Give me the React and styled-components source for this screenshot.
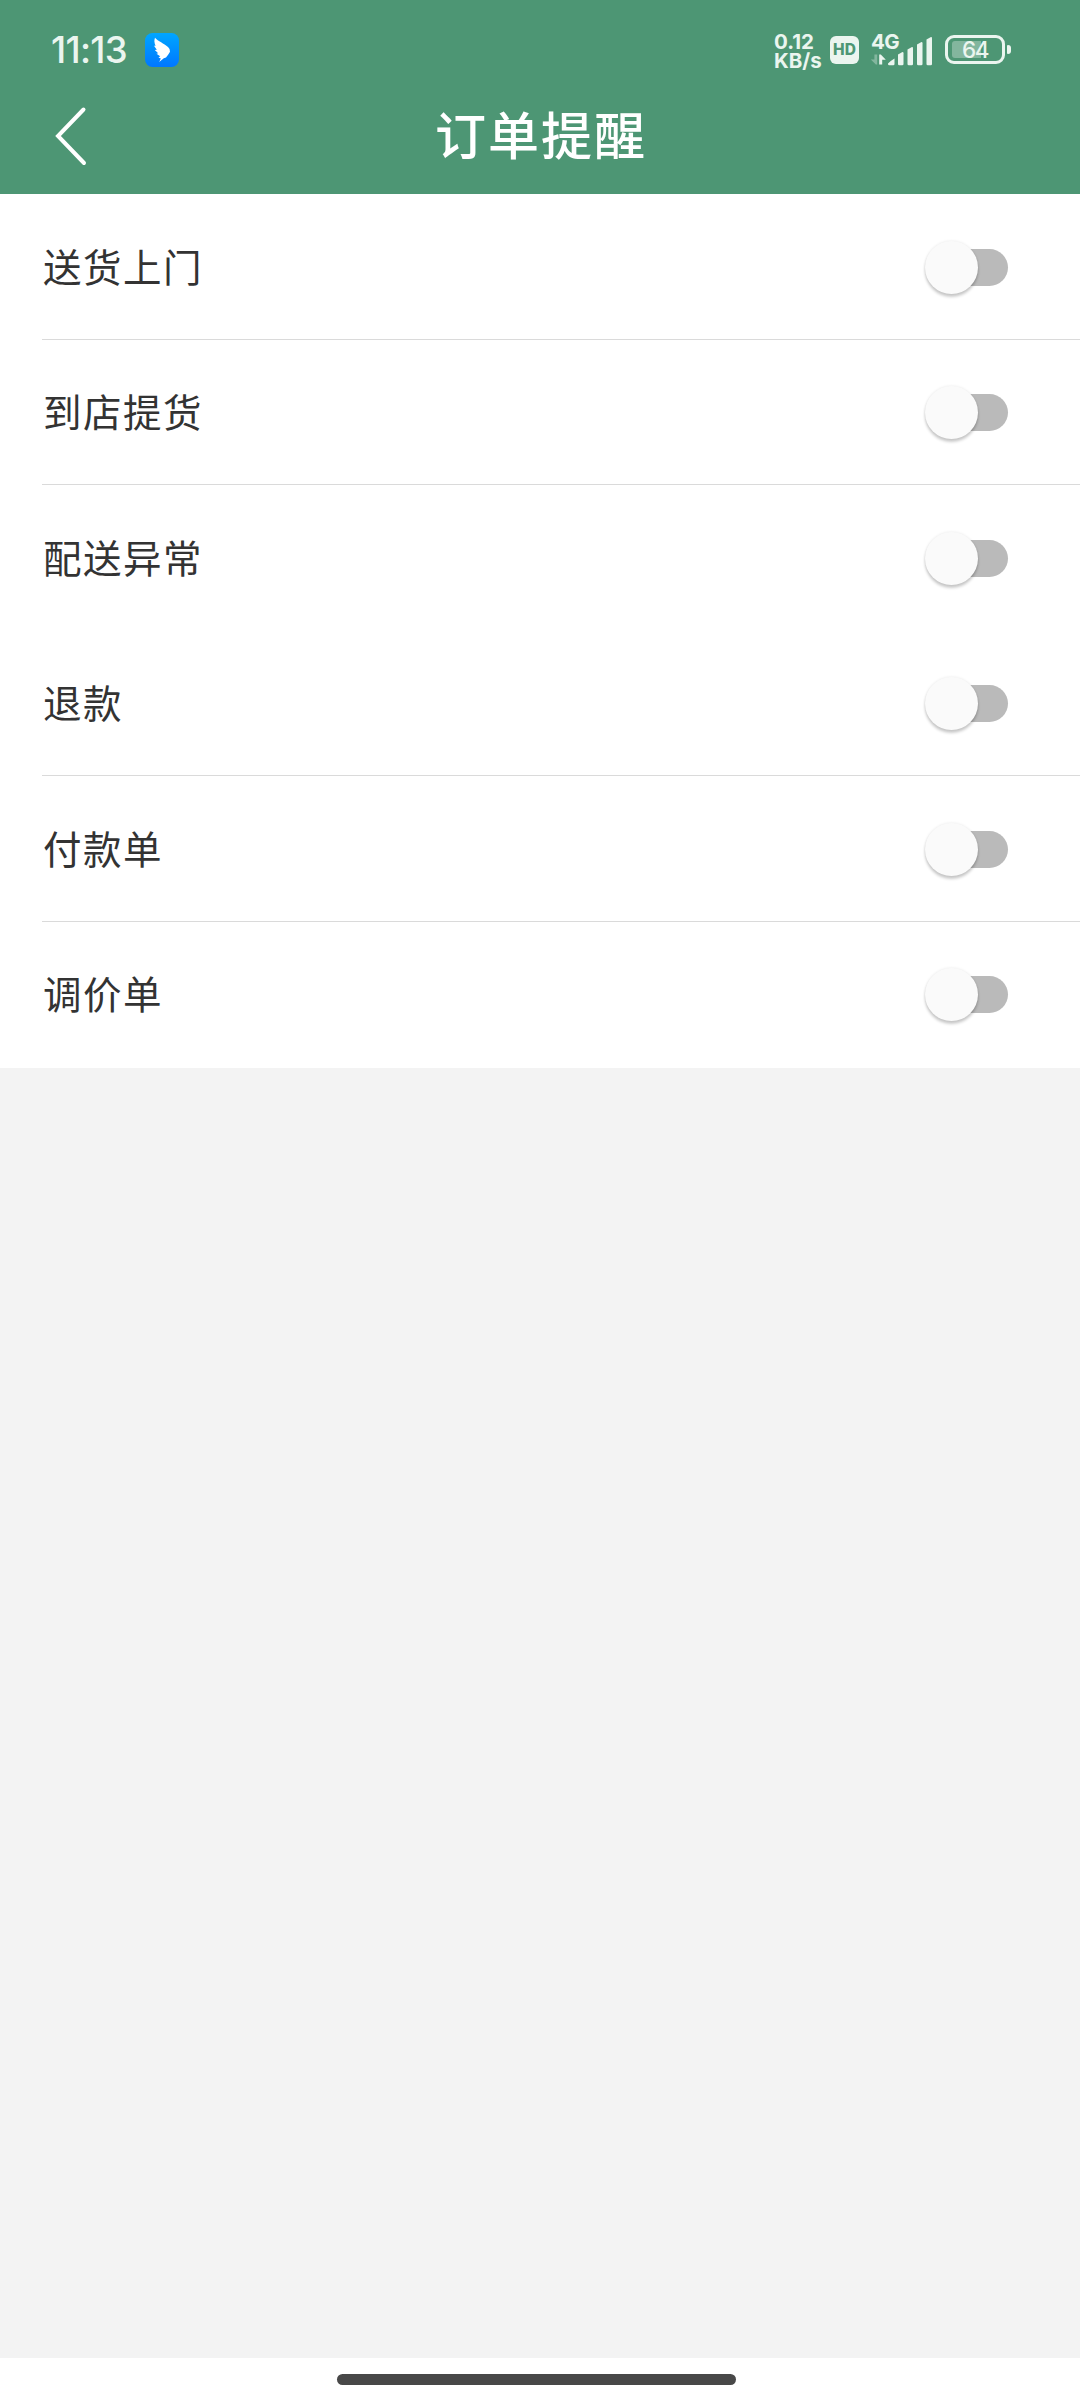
import React, { useState } from 'react';
import styled, { createGlobalStyle } from 'styled-components';

const GlobalStyle = createGlobalStyle`
  * {
    box-sizing: border-box;
  }

  body {
    margin: 0;
    background-color: #f3f3f3;
    font-family: 'Noto Sans CJK SC', sans-serif;
  }
`;

const Page = styled.div`
  display: flex;
  flex-direction: column;
  width: 1080px;
  height: 2400px;
  background-color: #f3f3f3;
`;

const Header = styled.header`
  height: 194px;
  background-color: #4d9674;
  color: #ffffff;
`;

const StatusBar = styled.div`
  display: flex;
  justify-content: space-between;
  height: 78px;
  padding: 21px 69px 0 51px;
  color: #ebf5ef;
  font-family: Inter, sans-serif;
`;

const StatusGroup = styled.div`
  display: flex;
  align-items: center;
`;

const Clock = styled.div`
  width: 94px;
  font-size: 36.5px;
  font-weight: 500;
  line-height: 56px;
  letter-spacing: -0.7px;
  white-space: nowrap;
`;

const NetSpeed = styled.div`
  width: 56px;
  padding-top: 3px;
  font-size: 20.5px;
  font-weight: 700;
  line-height: 19px;
  white-space: pre-line;
`;

const HdBadge = styled.div`
  width: 29px;
  height: 28px;
  margin-right: 11px;
  border-radius: 6px;
  background-color: #ebf5ef;
  color: #4d9674;
  font-size: 15.5px;
  font-weight: 800;
  line-height: 28px;
  text-align: center;
`;

const SignalWrapper = styled.div`
  display: grid;
  width: 75px;
  height: 34px;
  padding-top: 3px;

  > * {
    grid-area: 1 / 1;
  }
`;

const NetType = styled.div`
  height: 14px;
  padding-left: 1px;
  font-size: 20.5px;
  font-weight: 700;
  line-height: 12px;
  letter-spacing: -0.7px;
`;

const BatteryWrapper = styled.div`
  display: flex;
  align-items: center;
`;

const BatteryBody = styled.div`
  width: 60px;
  height: 29px;
  padding: 3px 4px;
  border: 3px solid #ebf5ef;
  border-radius: 9px;
`;

const BatteryLevel = styled.div`
  display: flex;
  align-items: center;
  justify-content: center;
  height: 17px;
  border-radius: 3px;
  background: linear-gradient(
    to right,
    #83b69e ${(props) => props.level}%,
    transparent ${(props) => props.level}%
  );
  font-size: 22.5px;
  font-weight: 500;
  line-height: 17px;
  letter-spacing: -1.5px;
`;

const BatteryCap = styled.div`
  width: 4px;
  height: 9px;
  margin-left: 2px;
  border-radius: 1px 3px 3px 1px;
  background-color: #ebf5ef;
`;

const NavBar = styled.div`
  display: grid;
  grid-template-columns: 120px 1fr 120px;
  align-items: center;
  height: 116px;
`;

const BackButton = styled.button`
  height: 116px;
  padding: 0 0 0 53px;
  border: 0;
  background: none;
  text-align: left;

  svg {
    display: block;
  }
`;

const Title = styled.h1`
  margin: 0;
  padding: 0 0 6px 2px;
  font-size: 51px;
  font-weight: 500;
  line-height: 74px;
  letter-spacing: 2px;
  text-align: center;
`;

const List = styled.div`
  padding-bottom: 2px;
  background-color: #ffffff;
`;

const Row = styled.div`
  display: flex;
  align-items: center;
  justify-content: space-between;
  height: ${(props) => props.height}px;
  margin-left: 42px;
  padding: 1px 72px 0 1px;
  border-bottom: 1px solid ${(props) => (props.divided ? '#dadada' : '#ffffff')};
`;

const Label = styled.div`
  padding-bottom: 5px;
  color: #333333;
  font-size: 38.5px;
  line-height: 56px;
  letter-spacing: 1.5px;
`;

const Track = styled.button`
  display: flex;
  align-items: center;
  flex-direction: ${(props) => (props.on ? 'row-reverse' : 'row')};
  width: 83px;
  height: 53px;
  padding: 0;
  border: 0;
  background: none;
`;

const TrackBar = styled.span`
  width: 57px;
  height: 37px;
  margin: ${(props) => (props.on ? '0 -27px 0 0' : '0 0 0 -27px')};
  border-radius: 19px;
  background-color: ${(props) => (props.on ? '#4d9674' : '#bababa')};
`;

const Thumb = styled.span`
  z-index: 1;
  width: 53px;
  height: 53px;
  flex-shrink: 0;
  border-radius: 50%;
  background-color: #fafafa;
  box-shadow: 0 3px 3px rgba(0, 0, 0, 0.2), 0 0 3px rgba(0, 0, 0, 0.09);
`;

const Filler = styled.div`
  flex: 1;
`;

const GestureBar = styled.div`
  height: 42px;
  padding: 16px 0 0 337px;
  background-color: #ffffff;
`;

const Handle = styled.div`
  width: 399px;
  height: 10.5px;
  border-radius: 6px;
  background-color: #484848;
`;

const BirdIcon = () => (
  <svg width="34" height="34" viewBox="0 0 34 34">
    <defs>
      <linearGradient id="sky" x1="0" y1="0" x2="0" y2="1">
        <stop offset="0" stopColor="#00a6ff" />
        <stop offset="1" stopColor="#0077ff" />
      </linearGradient>
    </defs>
    <rect width="34" height="34" rx="7.5" fill="url(#sky)" />
    <path
      d="M10 4.800C13 8.200 19 10.500 23 14Q25.800 16.500 25 18.800L23.300 21.500 21 24.500 18.800 25.200 14.200 29 15.800 25.400 13.500 24.600 15.200 23.200 11.500 20.800 13.200 20.300 9.800 17 11.800 16.800 9 12.800 10.600 12.800Q8.500 8.500 10 4.800Z"
      fill="#ffffff"
    />
  </svg>
);

const SignalBars = () => (
  <svg width="62" height="30" viewBox="0 0 62 30">
    <path d="M7.200 18.500v10H5.800L.8 23.500h3.600v-5Z" fill="#83b69e" />
    <path d="M9.200 28.500v-10h1.600l5 5.300h-3.600v4.700Z" fill="#ebf5ef" />
    <g fill="#ebf5ef">
      <path d="M18 27.500q3-3 6.500-5V28q0 1.300-1.300 1.300h-3.900q-1.300 0-1.300-1.300Z" />
      <path d="M28 18.500l4-2.300q1.500-.5 1.500 1V28q0 1.300-1.300 1.300h-2.900Q28 29.300 28 28Z" />
      <path d="M37.500 13.500l4-2.300q1.500-.5 1.500 1V28q0 1.300-1.300 1.300h-2.900q-1.300 0-1.300-1.300Z" />
      <path d="M47 8.500l4-2.300q1.500-.5 1.500 1V28q0 1.300-1.300 1.300h-2.900Q47 29.300 47 28Z" />
      <path d="M56.500 3.500l4-2.300q1.500-.5 1.500 1V28q0 1.300-1.300 1.300h-2.900q-1.300 0-1.300-1.300Z" />
    </g>
  </svg>
);

const BackIcon = () => (
  <svg width="34" height="60" viewBox="0 0 34 60">
    <path
      d="M30.500 3.500L5 30L31 57"
      fill="none"
      stroke="#ffffff"
      strokeWidth="4"
      strokeLinecap="round"
    />
  </svg>
);

const Switch = (props) => {
  const { on, onToggle } = props;

  return (
    <Track on={on ? 1 : undefined} onClick={onToggle}>
      <Thumb />
      <TrackBar on={on ? 1 : undefined} />
    </Track>
  );
};

const items = [
  { id: 'delivery', label: '送货上门', height: 146, divided: true },
  { id: 'pickup', label: '到店提货', height: 145, divided: true },
  { id: 'exception', label: '配送异常', height: 146, divided: false },
  { id: 'refund', label: '退款', height: 145, divided: true },
  { id: 'payment', label: '付款单', height: 146, divided: true },
  { id: 'pricing', label: '调价单', height: 144, divided: false },
];

const App = () => {
  const [enabled, setEnabled] = useState({});

  const toggle = (id) => {
    setEnabled({ ...enabled, [id]: !enabled[id] });
  };

  return (
    <Page>
      <GlobalStyle />
      <Header>
        <StatusBar>
          <StatusGroup>
            <Clock>11:13</Clock>
            <BirdIcon />
          </StatusGroup>
          <StatusGroup>
            <NetSpeed>{'0.12\nKB/s'}</NetSpeed>
            <HdBadge>HD</HdBadge>
            <SignalWrapper>
              <NetType>4G</NetType>
              <SignalBars />
            </SignalWrapper>
            <BatteryWrapper>
              <BatteryBody>
                <BatteryLevel level={64}>64</BatteryLevel>
              </BatteryBody>
              <BatteryCap />
            </BatteryWrapper>
          </StatusGroup>
        </StatusBar>
        <NavBar>
          <BackButton>
            <BackIcon />
          </BackButton>
          <Title>订单提醒</Title>
        </NavBar>
      </Header>
      <List>
        {items.map((item) => (
          <Row key={item.id} height={item.height} divided={item.divided ? 1 : undefined}>
            <Label>{item.label}</Label>
            <Switch on={enabled[item.id]} onToggle={() => toggle(item.id)} />
          </Row>
        ))}
      </List>
      <Filler />
      <GestureBar>
        <Handle />
      </GestureBar>
    </Page>
  );
};

export default App;
